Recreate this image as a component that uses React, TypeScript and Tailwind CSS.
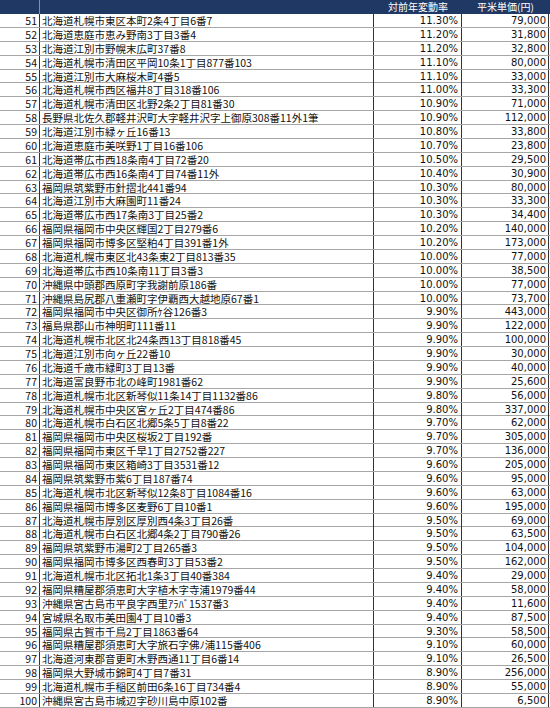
const rows: [number, string, string, string][] = [
  [51, "北海道札幌市東区本町2条4丁目6番7", "11.30%", "79,000"],
  [52, "北海道恵庭市恵み野南3丁目3番4", "11.20%", "31,800"],
  [53, "北海道江別市野幌末広町37番8", "11.20%", "32,800"],
  [54, "北海道札幌市清田区平岡10条1丁目877番103", "11.10%", "80,000"],
  [55, "北海道江別市大麻桜木町4番5", "11.10%", "33,000"],
  [56, "北海道札幌市西区福井8丁目318番106", "11.00%", "33,300"],
  [57, "北海道札幌市清田区北野2条2丁目81番30", "10.90%", "71,000"],
  [58, "長野県北佐久郡軽井沢町大字軽井沢字上御原308番11外1筆", "10.90%", "112,000"],
  [59, "北海道江別市緑ヶ丘16番13", "10.80%", "33,800"],
  [60, "北海道恵庭市美咲野1丁目16番106", "10.70%", "23,800"],
  [61, "北海道帯広市西18条南4丁目72番20", "10.50%", "29,500"],
  [62, "北海道帯広市西16条南4丁目74番11外", "10.40%", "30,900"],
  [63, "福岡県筑紫野市針摺北441番94", "10.30%", "80,000"],
  [64, "北海道江別市大麻園町11番24", "10.30%", "33,300"],
  [65, "北海道帯広市西17条南3丁目25番2", "10.30%", "34,400"],
  [66, "福岡県福岡市中央区輝国2丁目279番6", "10.20%", "140,000"],
  [67, "福岡県福岡市博多区堅粕4丁目391番1外", "10.20%", "173,000"],
  [68, "北海道札幌市東区北43条東2丁目813番35", "10.00%", "77,000"],
  [69, "北海道帯広市西10条南11丁目3番3", "10.00%", "38,500"],
  [70, "沖縄県中頭郡西原町字我謝前原186番", "10.00%", "77,000"],
  [71, "沖縄県島尻郡八重瀬町字伊覇西大越地原67番1", "10.00%", "73,700"],
  [72, "福岡県福岡市中央区御所ｹ谷126番3", "9.90%", "443,000"],
  [73, "福島県郡山市神明町111番11", "9.90%", "122,000"],
  [74, "北海道札幌市北区北24条西13丁目818番45", "9.90%", "100,000"],
  [75, "北海道江別市向ヶ丘22番10", "9.90%", "30,000"],
  [76, "北海道千歳市緑町3丁目13番", "9.90%", "40,000"],
  [77, "北海道富良野市北の峰町1981番62", "9.90%", "25,600"],
  [78, "北海道札幌市北区新琴似11条14丁目1132番86", "9.80%", "56,000"],
  [79, "北海道札幌市中央区宮ヶ丘2丁目474番86", "9.80%", "337,000"],
  [80, "北海道札幌市白石区北郷5条5丁目8番22", "9.70%", "62,000"],
  [81, "福岡県福岡市中央区桜坂2丁目192番", "9.70%", "305,000"],
  [82, "福岡県福岡市東区千早1丁目2752番227", "9.70%", "136,000"],
  [83, "福岡県福岡市東区箱崎3丁目3531番12", "9.60%", "205,000"],
  [84, "福岡県筑紫野市紫6丁目187番74", "9.60%", "95,000"],
  [85, "北海道札幌市北区新琴似12条8丁目1084番16", "9.60%", "63,000"],
  [86, "福岡県福岡市博多区麦野6丁目10番1", "9.60%", "195,000"],
  [87, "北海道札幌市厚別区厚別西4条3丁目26番", "9.50%", "69,000"],
  [88, "北海道札幌市白石区北郷4条2丁目790番26", "9.50%", "63,500"],
  [89, "福岡県筑紫野市湯町2丁目265番3", "9.50%", "104,000"],
  [90, "福岡県福岡市博多区西春町3丁目53番2", "9.50%", "162,000"],
  [91, "北海道札幌市北区拓北1条3丁目40番384", "9.40%", "29,000"],
  [92, "福岡県糟屋郡須恵町大字植木字寺浦1979番44", "9.40%", "58,000"],
  [93, "沖縄県宮古島市平良字西里ｱﾗﾊﾞ1537番3", "9.40%", "11,600"],
  [94, "宮城県名取市美田園4丁目10番3", "9.40%", "87,500"],
  [95, "福岡県古賀市千鳥2丁目1863番64", "9.30%", "58,500"],
  [96, "福岡県糟屋郡須恵町大字旅石字佛ﾉ浦115番406", "9.10%", "60,000"],
  [97, "北海道河東郡音更町木野西通11丁目6番14", "9.10%", "26,500"],
  [98, "福岡県大野城市錦町4丁目7番31", "8.90%", "256,000"],
  [99, "北海道札幌市手稲区前田6条16丁目734番4", "8.90%", "55,000"],
  [100, "沖縄県宮古島市城辺字砂川島中原102番", "8.90%", "6,500"],
];

// numeric cells: wider digits like the spreadsheet's font
const numFont = { fontFamily: '"DejaVu Sans", "Noto Sans", sans-serif' };

export default function App() {
  return (
    <div
      className="w-[550px] h-[708px] bg-white text-[#111] overflow-hidden"
      style={{ fontFamily: '"Noto Sans CJK JP", "Noto Sans", sans-serif' }}
    >
      {/* header */}
      <div className="grid grid-cols-[40px_334px_88px_87px] h-[14px] bg-[#203864] text-white text-[10px] leading-[14px]">
        <div className="border-r border-[#7f8fae]" />
        <div />
        <div className="text-center">対前年変動率</div>
        <div className="text-center">平米単価(円)</div>
      </div>

      {rows.map(([no, addr, rate, price]) => (
        <div
          key={no}
          className="grid grid-cols-[40px_334px_88px_87px] h-[13.88px] border-b border-[#a6a6a6] text-[10.5px] leading-[13px]"
        >
          <div className="border-r border-[#333] text-right pr-[2px]">{no}</div>
          <div className="border-r border-[#333] pl-[2px] whitespace-nowrap overflow-hidden">
            {addr}
          </div>
          <div className="border-r border-[#333] text-right pr-[3px] text-[10px]" style={numFont}>
            {rate}
          </div>
          <div className="border-r border-[#333] text-right pr-[2px] text-[10px]" style={numFont}>
            {price}
          </div>
        </div>
      ))}
    </div>
  );
}
